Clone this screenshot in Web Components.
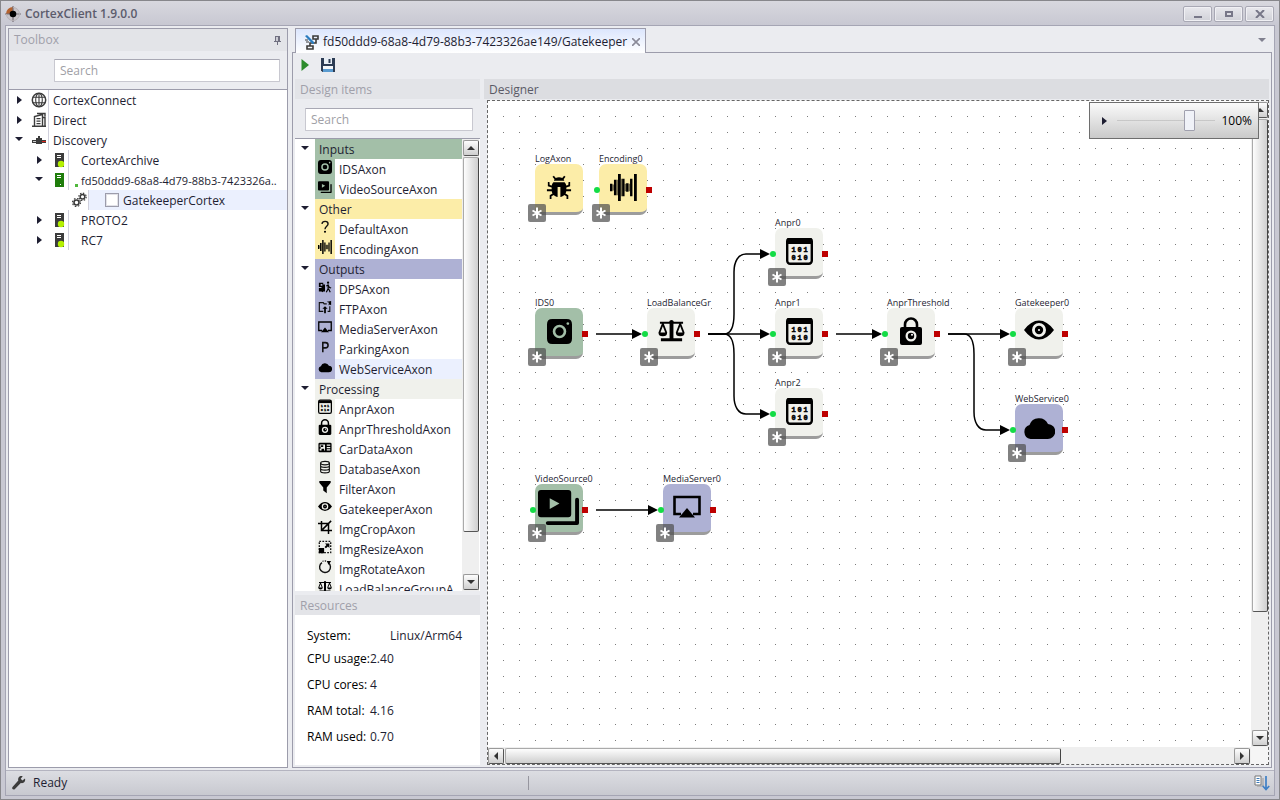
<!DOCTYPE html>
<html lang="en">
<head>
<meta charset="utf-8">
<title>CortexClient 1.9.0.0</title>
<style>
html, body { margin: 0; height: 100%; }
body {
  font: 12px/22px "Open Sans", "Noto Sans", sans-serif;
  color: #1e1e32;
  --line: #9c9cab;
  --panel: #ebecf0;
  --head: #e3e4e8;
  --green: #a3bfa8;
  --yellow: #fceda8;
  --blue: #aeb1d4;
  --grey: #f0f1ec;
}
</style>
</head>
<body>
<cortex-app></cortex-app>
<script>
/* Registers a custom element whose shadow root holds the given styles and markup. */
function define(name, css, render, ready) {
  customElements.define(name, class extends HTMLElement {
    connectedCallback() {
      if (this.shadowRoot) return;
      const root = this.attachShadow({ mode: 'open' });
      root.innerHTML = '<style>*{box-sizing:border-box}' + css + '</style>' + render(this);
      if (ready) ready(this, root);
    }
  });
}

/* Each icon: [viewBox, markup] */
const digit = (x, y, t) => `<text x="${x}" y="${y}" text-anchor="middle" font-family="Liberation Mono, monospace" font-weight="700" font-size="7" stroke="#000" stroke-width=".5">${t}</text>`;
const digits = (y, t) => [...t].map((c, i) => digit(7.5 + 6 * i, y, c)).join('');
const server = (c, dot) => `<path fill="${c}" d="M4 1h9v14H4z"/><path fill="#fff" d="M6 3h4v1H6zM6 5h4v1H6z"/>${dot}`;
const ICONS = {
  bug: ['0 0 28 28', '<path d="M8.500 2l2 2.300c2-1.200 5-1.200 7 0l2-2.300 1.500 1-2 2.600c.4.5.6 1 .6 1.600h-11c0-.6.2-1.100.6-1.600L7 3zM8 9h12c1 1 1.500 2 1.700 3.500l2.300-.7.300-3.300h1.700v4.600L21.900 14.600v1.900H27v2h-5.200c-.1 1-.4 1.800-.8 2.600l3 1.900v4h-1.900v-3l-2.500-1.500c-1 1.200-2.400 2-4.100 2.200V14h-3v10.700c-1.700-.2-3.100-1-4.100-2.200L5.900 24v3H4v-4l3-1.900c-.4-.8-.7-1.600-.8-2.600H1v-2h5.100v-1.900L2 13.100V8.500h1.700L4 11.800l2.300.7C6.500 11 7 10 8 9z"/>'],
  wave: ['0 0 28 28', '<path d="M0 10h2.500v8H0zM4.100 6h2.500v16H4.100zM8.300 0h2.900v28H8.300zM12.600 5h2.500v18h-2.500zM16.700 9.500h2.500v9h-2.500zM20.800 5h2.500v18h-2.500zM24.900 0h2.900v28h-2.900z"/><path fill="#0008" d="M2.500 11h1.600v6H2.500zM6.600 6h1.700v16H6.600zM15.100 10h1.600v8h-1.600zM19.200 10h1.600v8h-1.600zM11.200 5h1.400v18h-1.400z"/>'],
  camera: ['0 0 24 24', '<path fill-rule="evenodd" d="M5 0h14q5 0 5 5v14q0 5-5 5H5q-5 0-5-5V5q0-5 5-5zM12 5.500a6.500 6.500 0 1 0 0 13 6.500 6.500 0 0 0 0-13zm0 2.500a4 4 0 1 1 0 8 4 4 0 0 1 0-8zM20 3a1.300 1.300 0 1 0 .01 0z"/>'],
  scales: ['0 0 28 26', '<path fill-rule="evenodd" d="M14 1a2.500 2.500 0 0 1 2.400 2H26v2h-2l3.500 9q0 4-4.500 4t-4.500-4L22 5h-6v15h9v3H3v-3h9V5H6l3.500 9q0 4-4.500 4T.5 14L4 5H2V3h9.600A2.500 2.500 0 0 1 14 1zM5 7.500L2.500 14h5zM23 7.500L20.500 14h5z"/>'],
  binary: ['0 1 27 27', '<rect x="1.200" y="1.200" width="24.600" height="25.600" rx="3" fill="#f0f1ec" stroke="#000" stroke-width="2.400"/><path d="M2 2h23v5H2z"/>' + digits(15, '101') + digits(23, '010')],
  lock: ['0 0 22 28', '<path d="M5 11V7.500a6 6 0 0 1 12 0V11" fill="none" stroke="#000" stroke-width="2.600"/><rect y="10" width="22" height="18" rx="2"/><circle cx="11" cy="19" r="5.500" fill="#f0f1ec"/><circle cx="11" cy="19" r="3.200"/><circle cx="12" cy="17.800" r="1" fill="#fff"/>'],
  eye: ['0 1 30 30', '<path fill-rule="evenodd" d="M0 15Q7 5.500 15 5.500T30 15q-7 9.500-15 9.500T0 15zm15-7a7 7 0 1 0 0 14 7 7 0 0 0 0-14z"/><circle cx="15" cy="15" r="4.200"/><circle cx="15" cy="15" r="1" fill="#fff"/>'],
  cloud: ['0 -1 32 32', '<path d="M7.500 27A7.200 7.200 0 0 1 6.500 13 10 10 0 0 1 25 12 7.500 7.500 0 0 1 24.500 27z"/>'],
  video: ['0 -1 43 37', '<path fill-rule="evenodd" d="M3 0h28q3 0 3 3v22q0 3-3 3H3q-3 0-3-3V3q0-3 3-3zm9 8.500v11l10-5.500z"/><path d="M40 10v24H10" fill="none" stroke="#000" stroke-width="4" stroke-linecap="round" stroke-linejoin="round"/>'],
  airplay: ['0 0 28 28', '<path d="M8 21H1.500V4h25v17H20" fill="none" stroke="#000" stroke-width="2.600"/><path d="M14 15l8 9.500H6z"/>'],
  ask: ['0 0 16 16', '<path d="M4.500 4.500C5 .6 11.500.6 11.500 4.500c0 2.500-3.500 2.800-3.500 6" fill="none" stroke="#111" stroke-width="1.600"/><circle cx="8" cy="13.500" r="1.200"/>'],
  park: ['0 0 16 16', '<path d="M5.500 14V3H8.500a3 3 0 0 1 0 6H5.500" fill="none" stroke="#111" stroke-width="1.800"/>'],
  dps: ['0 0 16 16', '<path fill-rule="evenodd" d="M1 3h5v2h2v8H6l-1 1-1-1H1V9h3V8H1zM3 4.500v2h2v-2z"/><circle cx="11.500" cy="3" r="1.300"/><path d="M9.500 7l2-1.500 1.500 3 2 .5M11.500 6v4l-2 4M12 10l2 4" fill="none" stroke="#000" stroke-width="1.300"/>'],
  ftp: ['0 0 16 16', '<path d="M6 13H1.500V3H6l1 1.500h3M11 13h2.500V7" fill="none" stroke="#111" stroke-width="1.300"/><path d="M8 7l3 3H9v5H7v-5H5zM10 2l5-1v5l-1.500-1-1.500 1 .5-3z"/>'],
  card: ['0 0 16 16', '<path fill-rule="evenodd" d="M2 3h12q1.500 0 1.500 1.500v8Q15.500 14 14 14H2Q.5 14 .5 12.500v-8Q.5 3 2 3zm0 2v3h1V6h3v2H3v2H2v2h2v-2h3v2h1V5zm8 0v1.500h4V5zm0 3v1.500h4V8zm0 2.500V12h4v-1.500z"/>'],
  database: ['0 0 16 16', '<g fill="none" stroke="#111" stroke-width="1.300"><ellipse cx="8" cy="3.500" rx="5" ry="2"/><path d="M3 3.500v9.300c0 2.500 10 2.500 10 0V3.500M3 6.600c0 2.500 10 2.500 10 0M3 9.700c0 2.500 10 2.500 10 0"/></g>'],
  filter: ['0 0 16 16', '<path d="M1.500 1h13v2L10 8.500V15L6 12V8.500L1.500 3z"/>'],
  crop: ['0 0 16 16', '<path d="M0 4h12v12M4 1v11h12M5 11L15 1" fill="none" stroke="#000" stroke-width="1.700"/>'],
  resize: ['0 0 16 16', '<path d="M1.500 1.500h13v13h-13z" fill="none" stroke="#111" stroke-width="1.500" stroke-dasharray="2 1.500"/><path d="M1 9h6v6H1zM8 4h5v5l-1.700-1.700L9 9.500 7.500 8l2.200-2.300z"/>'],
  rotate: ['0 0 16 16', '<path d="M4.500 3A6.200 6.200 0 1 0 12 3.300" fill="none" stroke="#111" stroke-width="1.600"/><path d="M5 1.500a7 7 0 0 1 5 0" fill="none" stroke="#111" stroke-width="1.300" stroke-dasharray="1.500 1.200"/><path d="M10 1h5l-3 4.500z"/>'],
  asterisk: ['0 0 16 16', '<path d="M8 2.500v11M3.500 5.500l9 5M12.500 5.500l-9 5" stroke="#fff" stroke-width="2"/>'],
  globe: ['0 0 16 16', '<g fill="none" stroke="#3c3c3c" stroke-width="1.100"><circle cx="8" cy="8" r="6.700" stroke-width="1.500"/><ellipse cx="8" cy="8" rx="3.300" ry="6.700"/><path d="M8 1v14M2 5.200h12M2 10.800h12"/></g>'],
  building: ['0 0 16 16', '<path d="M3.500 14V4.500l8-2V14M1 14.200h14M11 5.500h3V14M6 1.500h8v3" fill="none" stroke="#3c3c3c" stroke-width="1.400"/><path d="M5.500 6h4v1.300h-4zM5.500 8.500h4v1.300h-4zM5.500 11h4v1.300h-4z" fill="#3c3c3c"/>'],
  plug: ['0 0 16 16', '<path d="M1 8h4V6h2V4h2v2h2v2h4v3H11v1H5v-1H1z" fill="#3c3c3c"/><path d="M11 9h4v1h-4z" fill="#d8281e"/><path d="M2 9h3v1H2z" fill="#ccc"/>'],
  server: ['0 0 16 16', server('#3c3c3c', '<circle cx="10" cy="12" r="3.200" fill="#b4f000"/>')],
  serverOn: ['0 0 16 16', server('#1f7d0c', '<path fill="#fff" d="M9 12h1v1H9z"/>')],
  gears: ['0 0 16 16', '<g fill="none" stroke="#3c3c3c"><circle cx="5.500" cy="10.500" r="2.500" stroke-width="1.600"/><circle cx="5.500" cy="10.500" r="4" stroke-width="1.200" stroke-dasharray="1.600 1.540"/><circle cx="11.500" cy="4.800" r="2.300" stroke-width="1.500"/><circle cx="11.500" cy="4.800" r="3.700" stroke-width="1.200" stroke-dasharray="1.450 1.450"/></g>'],
  wrench: ['0 0 16 16', '<path d="M14 3.500l-2.600 2-1.700-1.700 2-2.500C9 .3 6.500 2.500 7.300 5.500L1.500 12c-1.200 1.500.8 3.300 2.200 2.200L9.800 8c3 .8 5-1.700 4.200-4.500z" fill="#3c3c3c"/>'],
  pin: ['0 0 10 10', '<path d="M3 1h5v5h1v1H6v3H5V7H2V6h1z" fill="#707080"/><path d="M4 2h2v4H4z" fill="#ccccd4"/>'],
  run: ['0 0 16 16', '<path d="M4.500 2L12 8l-7.500 6z" fill="#2c8b2c"/>'],
  save: ['0 0 16 16', '<path d="M1 1h14v14H2.500L1 13.500z" fill="#2c3c54"/><path d="M4 1h8v6H4z" fill="#e8eef5"/><path d="M8.500 2h2v4h-2z" fill="#2c3c54"/><path d="M3 9h10v6H3z" fill="#f4f7fa"/><path d="M3 12h10v3H3z" fill="#5a9bd0"/>'],
  flow: ['0 0 16 16', '<path d="M9 2h5v3H9zM3 12h6v3H3zM12 5v4H6v3" fill="none" stroke="#3a3a3a" stroke-width="1.600"/><path d="M1 2l2-1 7 7v2L8 9.500z" fill="#2b7cbf"/><path d="M1 6h3M2 8h3" stroke="#3a3a3a"/>'],
  log: ['0 0 16 16', '<path d="M1 1h6v9H1z" fill="#fff" stroke="#777"/><path d="M3 11h6V3" fill="none" stroke="#999"/><path d="M2.500 3h3v1h-3zM2.500 5h3v1h-3zM2.500 7h3v1h-3z" fill="#3c7ab8"/><path d="M12 1v13M8.800 11l3.200 3.500 3.200-3.500" fill="none" stroke="#3f80c6" stroke-width="1.700"/>'],
  logo: ['0 0 16 16', '<circle cx="8" cy="8" r="6.500" fill="#c8c4c8"/><path d="M8 8V1A7 7 0 0 0 1 8z" fill="#b5622e"/><path d="M8 0v16M0 8h16" stroke="#777078" stroke-width="1.200"/><path d="M8 1.500A6.500 6.500 0 1 1 1.500 8" fill="none" stroke="#b5b0b5"/><circle cx="8" cy="8" r="3.300" fill="#000"/>']
};

define('x-icon', ':host{display:block;flex:none}svg{display:block;width:100%;height:100%}', el => {
  const [box, body] = ICONS[el.getAttribute('name')];
  return `<svg viewBox="${box}" aria-hidden="true">${body}</svg>`;
});

define('search-box', `:host{display:block}
  input{display:block;width:100%;height:23px;padding:0 5px;border:1px solid #c8c8d0;border-top-color:#a8a8b4;border-radius:1px;background:#fff;font:inherit;color:inherit;outline:0}
  input::placeholder{color:#a0a0a6;opacity:1}`,
  el => `<input type="search" placeholder="Search" aria-label="${el.getAttribute('label')}">`);

define('panel-head', `:host{display:flex;align-items:flex-start;justify-content:space-between;height:20px;padding:0 5px;background:var(--head);color:#a0a0aa;flex:none}
  :host([active]){background:#dcdde1;color:#5a5a66}`, () => '<slot></slot>');

define('tree-expander', `:host{display:block;width:20px;flex:none}
  button{display:flex;width:20px;height:20px;padding:0;border:0;background:none;align-items:center;justify-content:center}
  svg{width:8px;height:8px}`, el => `<button aria-label="Toggle">${el.hasAttribute('open')
    ? '<svg viewBox="0 0 8 8"><path d="M0 1h8L4 5z" fill="#1e1e32"/></svg>'
    : '<svg viewBox="0 0 8 8"><path d="M2 0l5 4-5 4z" fill="#1e1e32"/></svg>'}</button>`);

define('tree-row', `:host{display:flex;height:20px;white-space:nowrap;overflow:hidden}
  :host([level="1"]){padding-left:20px} :host([level="2"]){padding-left:40px}
  .gap{width:20px;flex:none}
  .ico{width:20px;flex:none;display:flex;align-items:center;justify-content:center;border-right:1px solid #d0d0dc}
  x-icon{width:16px;height:16px}
  .text{flex:1;min-width:0;padding-left:4px}
  :host([level="1"]) .text{padding-left:12px;position:relative}
  :host([level="2"]) .text{background:#ebf0fe;padding-left:16px}
  :host([online]) .text{font-size:11px}
  label{display:flex;align-items:flex-start;gap:4px}
  input{appearance:none;width:14px;height:14px;margin:3px 0 0;border:1px solid #9c9cab;background:#fff;box-shadow:inset 0 0 0 1px #e2e2e8}
  .dot{position:absolute;left:6px;top:14px;width:3px;height:3px;background:#50b83c}`,
  el => {
    const text = el.getAttribute('text'), mode = el.getAttribute('mode');
    return `${mode === 'leaf' ? '<span class="gap"></span>' : `<tree-expander ${mode}></tree-expander>`}
    <span class="ico"><x-icon name="${el.getAttribute('icon')}"></x-icon></span>
    <span class="text">${el.hasAttribute('online') ? '<i class="dot"></i>' : ''}${mode === 'leaf'
      ? `<label><input type="checkbox">${text}</label>` : text}</span>`;
  });

define('tool-box', `:host{display:flex;flex-direction:column;width:280px;flex:none;border:1px solid var(--line);background:#fff}
  panel-head{height:22px}
  x-icon{width:10px;height:10px;margin-top:6px}
  .find{background:var(--panel);padding:8px 7px 8px 45px;height:39px;border-bottom:1px solid var(--line)}`,
  () => `<panel-head>Toolbox<x-icon name="pin"></x-icon></panel-head>
  <div class="find"><search-box label="Search toolbox"></search-box></div>
  <tree-row mode="closed" icon="globe" text="CortexConnect"></tree-row>
  <tree-row mode="closed" icon="building" text="Direct"></tree-row>
  <tree-row mode="open" icon="plug" text="Discovery"></tree-row>
  <tree-row level="1" mode="closed" icon="server" text="CortexArchive"></tree-row>
  <tree-row level="1" mode="open" icon="serverOn" online text="fd50ddd9-68a8-4d79-88b3-7423326a.."></tree-row>
  <tree-row level="2" mode="leaf" icon="gears" text="GatekeeperCortex"></tree-row>
  <tree-row level="1" mode="closed" icon="server" text="PROTO2"></tree-row>
  <tree-row level="1" mode="closed" icon="server" text="RC7"></tree-row>`);

/* size: length of the thumb in thousandths of the track */
define('scroll-bar', `:host{display:flex;flex-direction:column;width:17px;background:#efefef;padding:1px 0 1px 1px;gap:1px;flex:none}
  :host([across]){flex-direction:row;width:auto;height:17px;padding:1px 1px 0 0}
  button{display:flex;align-items:center;justify-content:center;width:16px;height:16px;padding:0;flex:none;border:1px solid #999;border-right-color:#555;border-bottom-color:#555;border-radius:2px;background:linear-gradient(#fdfdfd,#cfcfcf)}
  svg{width:8px;height:8px}
  .track{flex:1;display:flex;flex-direction:inherit;min-width:0;min-height:0}
  .thumb{flex:var(--size) 1 0;border:1px solid #aaa;border-right-color:#444;border-bottom-color:#555;border-radius:2px;background:linear-gradient(90deg,#fdfdfd,#cfcfcf)}
  :host([across]) .thumb{background:linear-gradient(#fdfdfd,#cfcfcf)}
  .rest{flex:calc(1000 - var(--size)) 1 0}`,
  el => {
    const [a, b] = el.hasAttribute('across')
      ? ['M6 0v8L2 4z', 'M2 0l4 4-4 4z'] : ['M0 6h8L4 2z', 'M0 2h8L4 6z'];
    const btn = (d, l) => `<button aria-label="${l}"><svg viewBox="0 0 8 8"><path d="${d}" fill="#333"/></svg></button>`;
    return `<style>:host{--size:${el.getAttribute('size')}}</style>${btn(a, 'Back')}<div class="track"><div class="thumb"></div><div class="rest"></div></div>${btn(b, 'Forward')}`;
  });

define('axon-group', `:host{display:grid;grid-template-columns:20px 1fr}
  .head{background:var(--tone);padding-left:4px;height:20px}
  .items{grid-column:2}`,
  el => `<style>:host{--tone:var(--${el.getAttribute('tone')})}</style><tree-expander open></tree-expander><div class="head">${el.getAttribute('label')}</div><div class="items"><slot></slot></div>`);

define('axon-item', `:host{display:flex;height:20px;white-space:nowrap}
  .ico{width:20px;flex:none;background:var(--tone);display:flex;justify-content:center;padding-right:1px}
  x-icon{width:14px;height:16px}
  .text{flex:1;min-width:0;padding-left:4px}
  :host([selected]) .text{background:#ebf0fe}`,
  el => `<span class="ico"><x-icon name="${el.getAttribute('icon')}"></x-icon></span><span class="text"><slot></slot></span>`);

define('design-items', `:host{display:flex;flex-direction:column;flex:1;min-height:0}
  .find{padding:9px 7px 7px 10px;height:39px;flex:none}
  .list{flex:1;display:flex;min-height:0;border-top:1px solid var(--line);background:#fff;padding-right:1px}
  .groups{flex:1;min-width:0;overflow:hidden}`,
  () => {
    const group = (tone, label, items) => `<axon-group tone="${tone}" label="${label}">${items.map(([i, t, s]) => `<axon-item icon="${i}" ${s || ''}>${t}</axon-item>`).join('')}</axon-group>`;
    return `<panel-head>Design items</panel-head>
    <div class="find"><search-box label="Search design items"></search-box></div>
    <div class="list"><div class="groups">
    ${group('green', 'Inputs', [['camera', 'IDSAxon'], ['video', 'VideoSourceAxon']])}
    ${group('yellow', 'Other', [['ask', 'DefaultAxon'], ['wave', 'EncodingAxon']])}
    ${group('blue', 'Outputs', [['dps', 'DPSAxon'], ['ftp', 'FTPAxon'], ['airplay', 'MediaServerAxon'], ['park', 'ParkingAxon'], ['cloud', 'WebServiceAxon', 'selected']])}
    ${group('grey', 'Processing', [['binary', 'AnprAxon'], ['lock', 'AnprThresholdAxon'], ['card', 'CarDataAxon'], ['database', 'DatabaseAxon'], ['filter', 'FilterAxon'], ['eye', 'GatekeeperAxon'], ['crop', 'ImgCropAxon'], ['resize', 'ImgResizeAxon'], ['rotate', 'ImgRotateAxon'], ['scales', 'LoadBalanceGroupA']])}
    </div><scroll-bar size="902"></scroll-bar></div>`;
  });

define('resource-panel', `:host{display:block;margin-top:4px;flex:none}
  dl{margin:0;padding:11px 12px 15px;background:#fff;display:grid;grid-template-columns:63px 1fr;grid-template-rows:20px;grid-auto-rows:26px;align-items:center;white-space:nowrap}
  dt{color:#000} dd{margin:0}
  dd.wide{padding-left:20px}`,
  () => `<panel-head>Resources</panel-head><dl>
  <dt>System:</dt><dd class="wide">Linux/Arm64</dd><dt>CPU usage:</dt><dd>2.40</dd><dt>CPU cores:</dt><dd>4</dd><dt>RAM total:</dt><dd>4.16</dd><dt>RAM used:</dt><dd>0.70</dd></dl>`);

/* Diagram nodes: id, label, x, y, tone, icon, icon size, ports (i = input, o = output) */
const NODES = [
  ['log', 'LogAxon', 47, 63, 'yellow', 'bug', 26, ''],
  ['enc', 'Encoding0', 111, 63, 'yellow', 'wave', 27, 'io'],
  ['a0', 'Anpr0', 287, 127, 'grey', 'binary', 27, 'io'],
  ['ids', 'IDS0', 47, 207, 'green', 'camera', 25, 'o'],
  ['lb', 'LoadBalanceGr', 159, 207, 'grey', 'scales', 27, 'io'],
  ['a1', 'Anpr1', 287, 207, 'grey', 'binary', 27, 'io'],
  ['thr', 'AnprThreshold', 399, 207, 'grey', 'lock', 28, 'io'],
  ['gate', 'Gatekeeper0', 527, 207, 'grey', 'eye', 30, 'io'],
  ['a2', 'Anpr2', 287, 287, 'grey', 'binary', 27, 'io'],
  ['web', 'WebService0', 527, 303, 'blue', 'cloud', 32, 'io'],
  ['vid', 'VideoSource0', 47, 383, 'green', 'video', 42, 'io'],
  ['med', 'MediaServer0', 175, 383, 'blue', 'airplay', 28, 'io']
];
const LINKS = [['ids', 'lb'], ['lb', 'a0'], ['lb', 'a1'], ['lb', 'a2'], ['a1', 'thr'], ['thr', 'gate'], ['thr', 'web'], ['vid', 'med']];

define('axon-node', `:host{display:block;position:absolute;width:48px}
  .name{position:absolute;left:0;bottom:100%;white-space:nowrap;font-size:9px;line-height:10px}
  .box{height:51px;border-radius:7px;background:var(--tone);border-bottom:3px solid #9c9c9c;padding-bottom:2px;display:flex;align-items:center;justify-content:center}
  .badge{position:absolute;left:-7px;top:40px;width:18px;height:18px;border:0;padding:1px;border-radius:2px;background:#505050b8}
  .badge x-icon{width:16px;height:16px}
  .in,.out{position:absolute;top:23px;width:6px;height:6px}
  .in{left:-5px;border-radius:50%;background:#14dc46}
  .out{left:47px;background:#be0000}`,
  el => {
    const [, name, , , tone, icon, size, ports] = NODES[el.getAttribute('index')];
    return `<div class="name">${name}</div>
    <div class="box" style="--tone:var(--${tone})"><x-icon name="${icon}" style="width:${size}px;height:${size}px"></x-icon></div>
    ${ports.includes('i') ? '<i class="in"></i>' : ''}${ports.includes('o') ? '<i class="out"></i>' : ''}
    <button class="badge" aria-label="Settings"><x-icon name="asterisk"></x-icon></button>`;
  },
  el => {
    const n = NODES[el.getAttribute('index')];
    el.style.left = n[2] + 'px';
    el.style.top = n[3] + 'px';
  });

define('zoom-control', `:host{display:flex;align-items:center;width:170px;height:37px;padding:0 6px 0 4px;border:1px solid #6e6e6e;background:linear-gradient(#fafafa,#cacaca);color:#000}
  input{appearance:none;flex:1;min-width:0;height:22px;margin:0 6px 0 3px;background:linear-gradient(#bbb,#eee) center/100% 2px no-repeat}
  input::-webkit-slider-thumb{appearance:none;width:11px;height:21px;border:1px solid #a0a0ae;background:#f0f2f8;border-radius:1px}`,
  () => `<tree-expander></tree-expander><input type="range" min="0" max="100" value="77" aria-label="Zoom"><output>100%</output>`);

define('axon-designer', `:host{display:flex;flex-direction:column;flex:1;min-width:0}
  .frame{flex:1;min-height:0;margin:1px 0 0 3px;border:1px dashed #666;display:grid;grid-template:1fr 17px / 1fr 17px;background:#f5f5f5;position:relative}
  .canvas{position:relative;overflow:hidden;background:#fff}
  .canvas > svg{display:block;position:absolute;width:100%;height:100%}
  zoom-control{position:absolute;right:9px;top:1px}`,
  () => {
    const at = id => NODES.find(n => n[0] === id);
    const links = LINKS.map(([f, t]) => {
      const x = at(f)[2] + 61, y = at(f)[3] + 26, x2 = at(t)[2] - 5, y2 = at(t)[3] + 26;
      const s = Math.sign(y2 - y);
      const line = s === 0 ? `M${x} ${y}H${x2 - 9}`
        : `M${x} ${y}h16C${x + 23} ${y} ${x + 26} ${y + 8 * s} ${x + 26} ${y + 20 * s}V${y2 - 18 * s}C${x + 26} ${y2 - 8 * s} ${x + 30} ${y2} ${x + 38} ${y2}H${x2 - 9}`;
      return `<path d="${line}" fill="none" stroke="#000" stroke-width="1.500"/><path d="M${x2} ${y2}l-10-5v10z"/>`;
    }).join('');
    return `<panel-head active>Designer</panel-head>
    <div class="frame"><div class="canvas">
    <svg aria-hidden="true"><defs><pattern id="dots" width="16" height="16" patternUnits="userSpaceOnUse"><rect x="15" y="15" width="1" height="1" fill="#7c7c7c"/></pattern></defs><rect width="100%" height="100%" fill="url(#dots)"/>${links}</svg>
    ${NODES.map((n, i) => `<axon-node index="${i}"></axon-node>`).join('')}
    </div><scroll-bar size="807"></scroll-bar><scroll-bar across size="763"></scroll-bar><span></span>
    <zoom-control></zoom-control></div>`;
  });

define('doc-area', `:host{display:flex;flex-direction:column;flex:1;min-width:0}
  .tabs{display:flex;height:24px;padding:0 6px 0 3px;justify-content:space-between;align-items:center;flex:none}
  .tab{display:flex;align-items:center;gap:3px;height:25px;margin-bottom:-1px;padding:2px 3px 0 8px;border:1px solid var(--line);border-bottom:0;background:linear-gradient(#dce6fd,#fff);white-space:nowrap;position:relative;color:#1e1e32}
  button{border:0;background:none;padding:0;font:inherit;display:flex;align-items:center;justify-content:center}
  .close{width:12px;height:14px}
  .close svg{width:8px;height:8px}
  .more svg{width:8px;height:4px}
  .body{flex:1;min-height:0;border:1px solid var(--line);padding:0 2px 2px;display:flex;flex-direction:column}
  .tools{display:flex;align-items:center;gap:7px;height:26px;padding:0 2px 2px;flex:none}
  .tools x-icon,.tab > x-icon{width:16px;height:16px}
  .cols{flex:1;min-height:0;display:flex;gap:4px}
  .side{width:185px;flex:none;display:flex;flex-direction:column;min-height:0}`,
  () => `<div class="tabs"><div class="tab"><x-icon name="flow"></x-icon><span>fd50ddd9-68a8-4d79-88b3-7423326ae149/Gatekeeper</span><button class="close" aria-label="Close tab"><svg viewBox="0 0 8 8"><path d="M0 0l8 8M8 0L0 8" stroke="#8a8a98" stroke-width="1.600"/></svg></button></div>
  <button class="more" aria-label="Open documents"><svg viewBox="0 0 8 4"><path d="M0 0h8L4 4z" fill="#80808f"/></svg></button></div>
  <div class="body"><div class="tools"><button aria-label="Run"><x-icon name="run"></x-icon></button><button aria-label="Save"><x-icon name="save"></x-icon></button></div>
  <div class="cols"><div class="side"><design-items></design-items><resource-panel></resource-panel></div><axon-designer></axon-designer></div></div>`);

define('title-bar', `:host{display:flex;align-items:center;height:24px;gap:4px;padding:2px 5px 0 4px;flex:none;color:#5c5c6c;font-weight:600}
  x-icon{width:16px;height:16px}
  span{flex:1}
  div{display:flex;gap:2px}
  button{width:29px;height:16px;padding:0;border:1px solid #a8a8b4;border-radius:2px;background:linear-gradient(#e8e8ed,#d0d1d8);box-shadow:inset 0 0 0 1px #f0f0f4;display:flex;align-items:center;justify-content:center}
  svg{width:10px;height:8px;fill:none;stroke:#777788;stroke-width:2}`,
  () => `<x-icon name="logo"></x-icon><span>CortexClient 1.9.0.0</span><div>
  <button aria-label="Minimize"><svg viewBox="0 0 10 8"><path d="M1 7h8"/></svg></button>
  <button aria-label="Maximize"><svg viewBox="0 0 10 8"><path d="M2 2h6v4H2z"/></svg></button>
  <button aria-label="Close"><svg viewBox="0 0 10 8"><path d="M1 0l8 8M9 0L1 8"/></svg></button></div>`);

define('status-bar', `:host{display:grid;grid-template-columns:522px 1fr;align-items:center;height:25px;border-top:1px solid #b4b4c0;background:linear-gradient(#dcdde2,#c8c9d0);flex:none}
  div{display:flex;align-items:center;gap:6px;padding:0 4px 0 5px}
  .right{border-left:1px solid #96969f;height:14px;justify-content:flex-end}
  x-icon{width:16px;height:16px}`,
  () => `<div><x-icon name="wrench"></x-icon>Ready</div><div class="right"><x-icon name="log"></x-icon></div>`);

define('cortex-app', `:host{display:flex;flex-direction:column;height:100vh;border:1px solid #87878b;box-sizing:border-box;background:linear-gradient(#d8d8de,#c8c8d2 24px)}
  .frame{flex:1;min-height:0;display:flex;flex-direction:column;margin:0 4px 3px;border:1px solid #a5a5b4;background:var(--panel)}
  .main{flex:1;min-height:0;display:flex;gap:4px;padding:2px}`,
  () => `<title-bar></title-bar><div class="frame"><div class="main"><tool-box></tool-box><doc-area></doc-area></div><status-bar></status-bar></div>`);
</script>
</body>
</html>
